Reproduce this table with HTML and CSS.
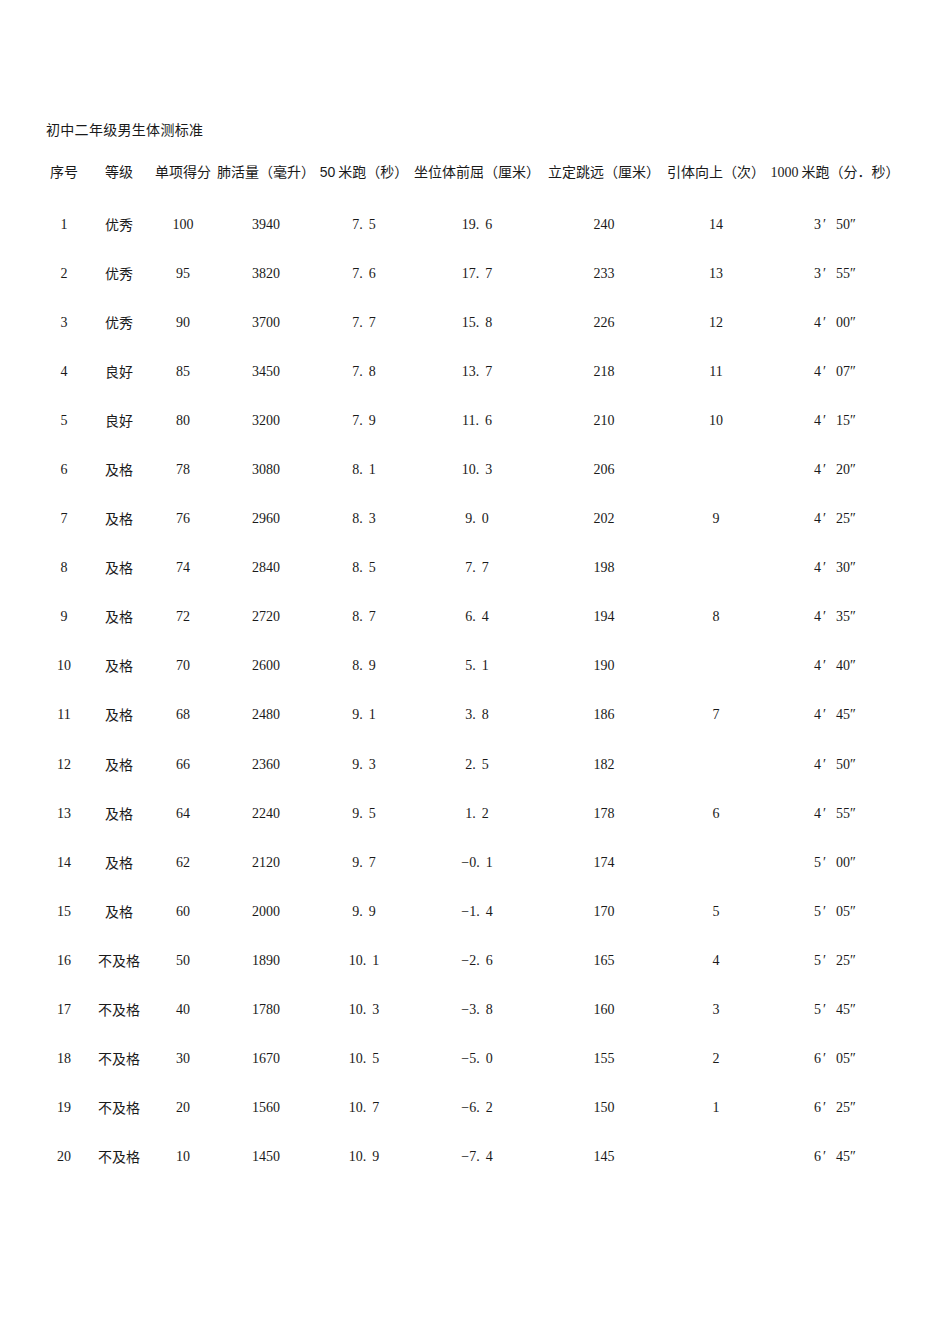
FILE: index.html
```html
<!DOCTYPE html>
<html lang="zh-CN">
<head>
<meta charset="utf-8">
<title>初中二年级男生体测标准</title>
<link rel="stylesheet" href="styles.css">
</head>
<body>
<div class="page">
  <div class="title">初中二年级男生体测标准</div>
  <table class="std">
    <colgroup>
      <col class="c1"><col class="c2"><col class="c3"><col class="c4"><col class="c5"><col class="c6"><col class="c7"><col class="c8"><col class="c9">
    </colgroup>
    <thead>
      <tr>
        <th>序号</th><th>等级</th><th>单项得分</th><th>肺活量（毫升）</th><th><span class="sans">50</span> 米跑（秒）</th><th>坐位体前屈（厘米）</th><th>立定跳远（厘米）</th><th>引体向上（次）</th><th><span class="ser">1000</span> 米跑（分．秒）</th>
      </tr>
    </thead>
    <tbody>
      <tr><td>1</td><td class="cn">优秀</td><td>100</td><td>3940</td><td>7<span class="dp">.</span>5</td><td>19<span class="dp">.</span>6</td><td>240</td><td>14</td><td>3<span class="pr">′</span>50″</td></tr>
      <tr><td>2</td><td class="cn">优秀</td><td>95</td><td>3820</td><td>7<span class="dp">.</span>6</td><td>17<span class="dp">.</span>7</td><td>233</td><td>13</td><td>3<span class="pr">′</span>55″</td></tr>
      <tr><td>3</td><td class="cn">优秀</td><td>90</td><td>3700</td><td>7<span class="dp">.</span>7</td><td>15<span class="dp">.</span>8</td><td>226</td><td>12</td><td>4<span class="pr">′</span>00″</td></tr>
      <tr><td>4</td><td class="cn">良好</td><td>85</td><td>3450</td><td>7<span class="dp">.</span>8</td><td>13<span class="dp">.</span>7</td><td>218</td><td>11</td><td>4<span class="pr">′</span>07″</td></tr>
      <tr><td>5</td><td class="cn">良好</td><td>80</td><td>3200</td><td>7<span class="dp">.</span>9</td><td>11<span class="dp">.</span>6</td><td>210</td><td>10</td><td>4<span class="pr">′</span>15″</td></tr>
      <tr><td>6</td><td class="cn">及格</td><td>78</td><td>3080</td><td>8<span class="dp">.</span>1</td><td>10<span class="dp">.</span>3</td><td>206</td><td></td><td>4<span class="pr">′</span>20″</td></tr>
      <tr><td>7</td><td class="cn">及格</td><td>76</td><td>2960</td><td>8<span class="dp">.</span>3</td><td>9<span class="dp">.</span>0</td><td>202</td><td>9</td><td>4<span class="pr">′</span>25″</td></tr>
      <tr><td>8</td><td class="cn">及格</td><td>74</td><td>2840</td><td>8<span class="dp">.</span>5</td><td>7<span class="dp">.</span>7</td><td>198</td><td></td><td>4<span class="pr">′</span>30″</td></tr>
      <tr><td>9</td><td class="cn">及格</td><td>72</td><td>2720</td><td>8<span class="dp">.</span>7</td><td>6<span class="dp">.</span>4</td><td>194</td><td>8</td><td>4<span class="pr">′</span>35″</td></tr>
      <tr><td>10</td><td class="cn">及格</td><td>70</td><td>2600</td><td>8<span class="dp">.</span>9</td><td>5<span class="dp">.</span>1</td><td>190</td><td></td><td>4<span class="pr">′</span>40″</td></tr>
      <tr><td>11</td><td class="cn">及格</td><td>68</td><td>2480</td><td>9<span class="dp">.</span>1</td><td>3<span class="dp">.</span>8</td><td>186</td><td>7</td><td>4<span class="pr">′</span>45″</td></tr>
      <tr><td>12</td><td class="cn">及格</td><td>66</td><td>2360</td><td>9<span class="dp">.</span>3</td><td>2<span class="dp">.</span>5</td><td>182</td><td></td><td>4<span class="pr">′</span>50″</td></tr>
      <tr><td>13</td><td class="cn">及格</td><td>64</td><td>2240</td><td>9<span class="dp">.</span>5</td><td>1<span class="dp">.</span>2</td><td>178</td><td>6</td><td>4<span class="pr">′</span>55″</td></tr>
      <tr><td>14</td><td class="cn">及格</td><td>62</td><td>2120</td><td>9<span class="dp">.</span>7</td><td>−0<span class="dp">.</span>1</td><td>174</td><td></td><td>5<span class="pr">′</span>00″</td></tr>
      <tr><td>15</td><td class="cn">及格</td><td>60</td><td>2000</td><td>9<span class="dp">.</span>9</td><td>−1<span class="dp">.</span>4</td><td>170</td><td>5</td><td>5<span class="pr">′</span>05″</td></tr>
      <tr><td>16</td><td class="cn">不及格</td><td>50</td><td>1890</td><td>10<span class="dp">.</span>1</td><td>−2<span class="dp">.</span>6</td><td>165</td><td>4</td><td>5<span class="pr">′</span>25″</td></tr>
      <tr><td>17</td><td class="cn">不及格</td><td>40</td><td>1780</td><td>10<span class="dp">.</span>3</td><td>−3<span class="dp">.</span>8</td><td>160</td><td>3</td><td>5<span class="pr">′</span>45″</td></tr>
      <tr><td>18</td><td class="cn">不及格</td><td>30</td><td>1670</td><td>10<span class="dp">.</span>5</td><td>−5<span class="dp">.</span>0</td><td>155</td><td>2</td><td>6<span class="pr">′</span>05″</td></tr>
      <tr><td>19</td><td class="cn">不及格</td><td>20</td><td>1560</td><td>10<span class="dp">.</span>7</td><td>−6<span class="dp">.</span>2</td><td>150</td><td>1</td><td>6<span class="pr">′</span>25″</td></tr>
      <tr><td>20</td><td class="cn">不及格</td><td>10</td><td>1450</td><td>10<span class="dp">.</span>9</td><td>−7<span class="dp">.</span>4</td><td>145</td><td></td><td>6<span class="pr">′</span>45″</td></tr>
    </tbody>
  </table>
</div>
</body>
</html>
```
FILE: styles.css
```css
html, body {
  margin: 0;
  padding: 0;
  background: #fff;
}
body {
  color: #1a1a1a;
  font-family: "Liberation Serif", "Noto Sans CJK SC", serif;
  font-size: 14px;
}
.page {
  padding: 119px 0 0 40px;
}
.title {
  font-family: "Noto Sans CJK SC", sans-serif;
  font-size: 14px;
  line-height: 20px;
  height: 20px;
  padding-left: 6px;
  letter-spacing: 0.3px;
}
.std {
  border-collapse: collapse;
  table-layout: fixed;
  width: 864px;
  margin-top: 22px;
}
.c1 { width: 48px; }
.c2 { width: 62px; }
.c3 { width: 66px; }
.c4 { width: 100px; }
.c5 { width: 96px; }
.c6 { width: 130px; }
.c7 { width: 124px; }
.c8 { width: 100px; }
.c9 { width: 138px; }
.std th {
  font-family: "Noto Sans CJK SC", sans-serif;
  font-weight: normal;
  font-size: 14px;
  line-height: 20px;
  height: 20px;
  padding: 0 0 17px 0;
  text-align: center;
  white-space: nowrap;
  vertical-align: top;
}
.std th .sans {
  font-family: "Liberation Sans", sans-serif;
}
.std th .ser {
  font-family: "Liberation Serif", serif;
}
.std td {
  height: 49.05px;
  line-height: 49px;
  padding: 0;
  text-align: center;
  white-space: nowrap;
  font-size: 14px;
}
.std td.cn {
  font-family: "Noto Sans CJK SC", sans-serif;
}
.dp {
  margin-right: 6px;
}
.pr {
  margin-left: 2px;
  margin-right: 10px;
}
```
